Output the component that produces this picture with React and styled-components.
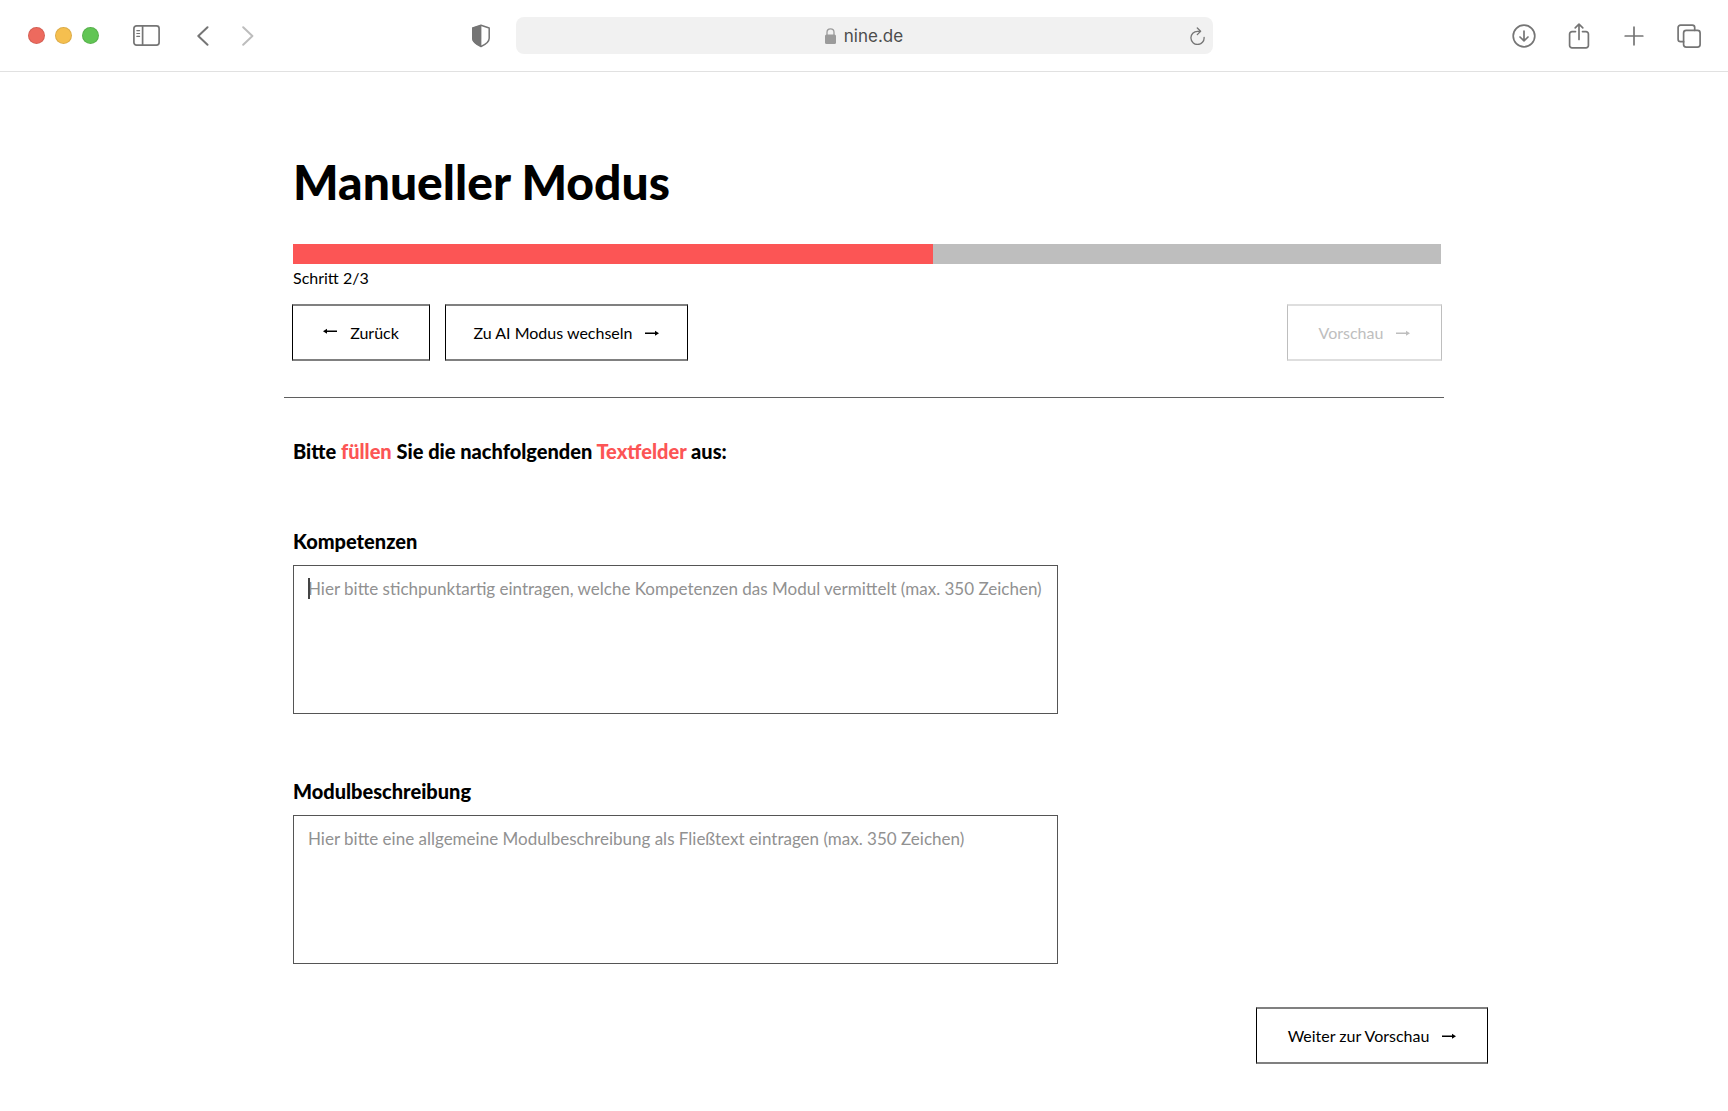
import React from "react";
import styled, { createGlobalStyle } from "styled-components";

const display = `Lato, "Open Sans", sans-serif`;
const body = `Inter, "Open Sans", sans-serif`;
const accent = "#fc5555";

const GlobalStyle = createGlobalStyle`
  *, *::before, *::after { box-sizing: border-box; }
  body { margin: 0; background: #fff; color: #000; font-family: ${display}; }
`;

/* Browser toolbar */
const Toolbar = styled.header`
  display: grid;
  grid-template-columns: 1fr minmax(0, 697px) 1fr;
  align-items: center;
  height: 72px;
  border-bottom: 1px solid #e1e1e1;
  color: #757575;
`;

const ToolbarStart = styled.div`
  display: flex;
  align-items: center;
  padding: 0 25px 0 28px;
`;

const ToolbarEnd = styled.div`
  display: flex;
  align-items: center;
  justify-content: flex-end;
  gap: 31px;
  padding-right: 27px;
`;

const WindowControls = styled.div`
  display: flex;
  gap: 10px;
  margin-right: 34px;
`;

const WindowDot = styled.button`
  width: 17px;
  height: 17px;
  padding: 0;
  border: 1px solid rgba(0, 0, 0, 0.1);
  border-radius: 50%;
  background: ${(p) => p.$color};
`;

const IconButton = styled.button`
  display: flex;
  padding: 0;
  border: 0;
  background: none;
  color: ${(p) => (p.disabled ? "#bdbdbd" : "inherit")};
`;

const History = styled.nav`
  display: flex;
  gap: 33px;
  margin: 0 auto 0 37px;
`;

const AddressBar = styled.div`
  display: grid;
  grid-template-columns: 1fr auto 1fr;
  align-items: center;
  height: 37px;
  padding: 0 8px;
  border-radius: 8px;
  background: #f1f1f1;
`;

const Address = styled.a`
  grid-column: 2;
  display: flex;
  align-items: center;
  gap: 8px;
  color: #4c4c4c;
  font: 17px/24px ${body};
  text-decoration: none;
`;

const ReloadSlot = styled.div`
  display: flex;
  justify-content: flex-end;
`;

/* Page */
const Page = styled.main`
  padding: 80px 24px 24px;
`;

const Column = styled.div`
  max-width: 1160px;
  margin: 0 auto;
`;

const Section = styled.section`
  padding: 0 3px 0 9px;
`;

const Title = styled.h1`
  margin: 0 0 32px;
  font-size: 48px;
  line-height: 60px;
  font-weight: 900;
`;

const Track = styled.div`
  height: 20px;
  background: #bebebe;
`;

const Fill = styled.div`
  height: 100%;
  background: ${accent};
`;

const Step = styled.p`
  margin: 4px 0 16px;
  font-size: 16px;
  line-height: 20px;
`;

const Actions = styled.div`
  display: flex;
  gap: 15px;
  margin: 0 -1px;
`;

const ActionButton = styled.button`
  display: flex;
  align-items: center;
  justify-content: center;
  gap: 13px;
  min-width: ${(p) => p.$width}px;
  height: 57px;
  margin-left: ${(p) => (p.$end ? "auto" : "0")};
  padding: 0 24px;
  border-style: solid;
  border-width: 2px 1px;
  border-color: ${(p) => (p.disabled ? "#dedede #bebebe" : "#808080 #000")};
  background: #fff;
  color: ${(p) => (p.disabled ? "#bebebe" : "#000")};
  font: 16px/20px ${display};
  white-space: nowrap;
`;

const Divider = styled.hr`
  height: 1px;
  margin: 36px 0 41px;
  border: 0;
  background: #5f5f5f;
`;

const Prompt = styled.h2`
  margin: 0 0 66px;
  font-size: 20px;
  line-height: 24px;
  font-weight: 900;
`;

const Highlight = styled.span`
  color: ${accent};
`;

const Fields = styled.form`
  display: grid;
  gap: 65px;
  max-width: 765px;
`;

const Field = styled.div`
  display: grid;
  gap: 12px;
`;

const Label = styled.label`
  font-size: 20px;
  line-height: 24px;
  font-weight: 900;
`;

const InputFrame = styled.div`
  position: relative;
  display: grid;
`;

const TextArea = styled.textarea`
  height: 149px;
  padding: 12px 14px;
  border: 1px solid #555;
  border-radius: 0;
  outline: 0;
  background: #fff;
  color: #000;
  font: 17px/22px ${display};
  resize: none;

  &::placeholder { color: #919191; opacity: 1; }
`;

const Caret = styled.span`
  position: absolute;
  top: 13px;
  left: 15px;
  width: 2px;
  height: 21px;
  background: #444;
`;

const Footer = styled.footer`
  display: flex;
  justify-content: flex-end;
  max-width: 1248px;
  margin: 43px auto 0;
`;

function Icon({ width = 24, height = 24, children }) {
  return (
    <svg
      width={width}
      height={height}
      viewBox={`0 0 ${width} ${height}`}
      fill="none"
      stroke="currentColor"
      strokeWidth="1.7"
      strokeLinecap="round"
      strokeLinejoin="round"
      aria-hidden="true"
    >
      {children}
    </svg>
  );
}

const ArrowRight = () => (
  <svg width="14" height="8" viewBox="0 0 14 8" fill="currentColor" aria-hidden="true">
    <path d="M0 3.5h10V1.7L14 4.2l-4 2.5V5H0z" />
  </svg>
);

const ArrowLeft = () => (
  <svg width="14" height="12" viewBox="0 0 14 12" fill="currentColor" aria-hidden="true">
    <path d="M14 3.5H4V1.7L0 4.2l4 2.5V5h10z" />
  </svg>
);

function BrowserToolbar() {
  return (
    <Toolbar>
      <ToolbarStart>
        <WindowControls>
          <WindowDot $color="#ed6a5e" aria-label="Schließen" />
          <WindowDot $color="#f5bf4f" aria-label="Minimieren" />
          <WindowDot $color="#61c554" aria-label="Maximieren" />
        </WindowControls>
        <IconButton aria-label="Seitenleiste">
          <Icon width={27} height={21}>
            <rect x="0.9" y="0.9" width="25.2" height="19.2" rx="2.6" />
            <path d="M9.6 1v19" />
            <path d="M3.8 5.6h2.8M3.8 8.5h2.8M3.8 11.4h2.8" strokeWidth="1.1" />
          </Icon>
        </IconButton>
        <History aria-label="Verlauf">
          <IconButton aria-label="Zurück blättern">
            <Icon width={12} height={20}>
              <path d="M10.5 1.2 1.3 10l9.2 8.8" strokeWidth="2" />
            </Icon>
          </IconButton>
          <IconButton aria-label="Vorwärts blättern" disabled>
            <Icon width={12} height={20}>
              <path d="M1.2 1.2 10.4 10l-9.2 8.8" strokeWidth="2" />
            </Icon>
          </IconButton>
        </History>
        <IconButton aria-label="Datenschutz">
          <Icon width={20} height={24}>
            <path d="M10 1.3 18.2 4v10.2c0 3.6-3.8 6.3-8.2 8.3-4.4-2-8.2-4.7-8.2-8.3V4z" strokeWidth="1.5" />
            <path d="M10.4 1v21.7C6 20.7 1 18 1 14.200V3.800z" fill="currentColor" stroke="none" />
          </Icon>
        </IconButton>
      </ToolbarStart>
      <AddressBar>
        <Address href="#">
          <svg width="11" height="16" viewBox="0 0 11 16" aria-hidden="true">
            <rect y="6.6" width="11" height="9.4" rx="1.5" fill="#9b9b9b" />
            <path d="M2 7.5V4.3C2 2 3.5.8 5.5.8S9 2 9 4.3v3.2" fill="none" stroke="#9b9b9b" strokeWidth="1.3" />
          </svg>
          nine.de
        </Address>
        <ReloadSlot>
          <IconButton aria-label="Neu laden">
            <Icon width={15} height={18}>
              <path d="M14.1 10.4A6.6 6.6 0 1 1 7.5 4.3h2.8M7.3 1l3.3 3.3-3.3 3.3" strokeWidth="1.3" />
            </Icon>
          </IconButton>
        </ReloadSlot>
      </AddressBar>
      <ToolbarEnd>
        <IconButton aria-label="Downloads">
          <Icon>
            <circle cx="12" cy="12" r="10.8" />
            <path d="M12 7v9.8M8 13l4 3.9 4-3.9" />
          </Icon>
        </IconButton>
        <IconButton aria-label="Teilen">
          <Icon height={26}>
            <path d="M8.5 8.6H5A2.4 2.4 0 0 0 2.6 11v11.4A2.4 2.4 0 0 0 5 24.8h14a2.4 2.4 0 0 0 2.4-2.4V11A2.4 2.4 0 0 0 19 8.6h-3.5" />
            <path d="M12 16.5V1.2M8.2 4.8 12 1.2l3.8 3.6" />
          </Icon>
        </IconButton>
        <IconButton aria-label="Neuer Tab">
          <Icon>
            <path d="M12 3.2v17.6M3.2 12h17.6" />
          </Icon>
        </IconButton>
        <IconButton aria-label="Tabübersicht">
          <Icon>
            <rect x="6.6" y="6.3" width="16.5" height="16.8" rx="2.6" />
            <path d="M6.6 17.7H3.5a2.4 2.4 0 0 1-2.4-2.4V3.5a2.4 2.4 0 0 1 2.4-2.4h11.8a2.4 2.4 0 0 1 2.4 2.4v2.8" />
          </Icon>
        </IconButton>
      </ToolbarEnd>
    </Toolbar>
  );
}

const fields = [
  {
    id: "kompetenzen",
    label: "Kompetenzen",
    placeholder: "Hier bitte stichpunktartig eintragen, welche Kompetenzen das Modul vermittelt (max. 350 Zeichen)",
    active: true,
  },
  {
    id: "modulbeschreibung",
    label: "Modulbeschreibung",
    placeholder: "Hier bitte eine allgemeine Modulbeschreibung als Fließtext eintragen (max. 350 Zeichen)",
  },
];

export default function App() {
  return (
    <>
      <GlobalStyle />
      <BrowserToolbar />
      <Page>
        <Column>
          <Section>
            <Title>Manueller Modus</Title>
            <Track role="progressbar" aria-label="Fortschritt" aria-valuenow={2} aria-valuemin={0} aria-valuemax={3}>
              <Fill style={{ width: `${(640 / 1148) * 100}%` }} />
            </Track>
            <Step>Schritt 2/3</Step>
            <Actions>
              <ActionButton $width={138}>
                <ArrowLeft />
                Zurück
              </ActionButton>
              <ActionButton $width={243}>
                Zu AI Modus wechseln
                <ArrowRight />
              </ActionButton>
              <ActionButton $width={155} $end disabled>
                Vorschau
                <ArrowRight />
              </ActionButton>
            </Actions>
          </Section>
          <Divider />
          <Section>
            <Prompt>
              Bitte <Highlight>füllen</Highlight> Sie die nachfolgenden <Highlight>Textfelder</Highlight> aus:
            </Prompt>
            <Fields>
              {fields.map((field) => (
                <Field key={field.id}>
                  <Label htmlFor={field.id}>{field.label}</Label>
                  <InputFrame>
                    <TextArea id={field.id} maxLength={350} placeholder={field.placeholder} />
                    {field.active && <Caret />}
                  </InputFrame>
                </Field>
              ))}
            </Fields>
          </Section>
        </Column>
        <Footer>
          <ActionButton $width={232}>
            Weiter zur Vorschau
            <ArrowRight />
          </ActionButton>
        </Footer>
      </Page>
    </>
  );
}
